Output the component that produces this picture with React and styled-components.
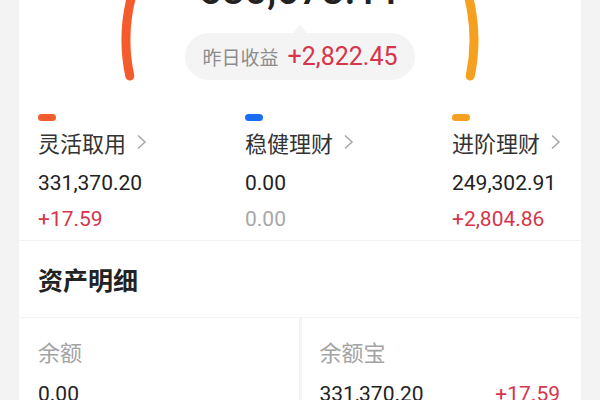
import React from 'react';
import styled, { createGlobalStyle } from 'styled-components';

const GlobalStyle = createGlobalStyle`
  html, body {
    margin: 0;
    padding: 0;
    background: #f3f3f3;
    overflow: hidden;
  }
  body {
    font-family: "Noto Sans CJK SC", "Noto Sans", sans-serif;
    color: #222;
  }
`;

const NUM_FONT = `Roboto, "Noto Sans CJK SC", sans-serif`;
const RED = '#d6354b';

const Page = styled.div`
  width: 600px;
  height: 400px;
  padding: 0 19px;
  box-sizing: border-box;
  display: flex;
  flex-direction: column;
  gap: 1px;
`;

const Card = styled.section`
  background: #fff;
`;

const Header = styled.div`
  position: relative;
  height: 114px;
  display: flex;
  flex-direction: column;
  align-items: center;
`;

const Gauge = styled.svg`
  position: absolute;
  left: 0;
  top: 0;
  width: 100%;
  height: 100px;
`;

const Total = styled.div`
  position: relative;
  margin-top: -29px;
  font-family: ${NUM_FONT};
  font-size: 40px;
  line-height: 40px;
  font-weight: 500;
  color: #222;
`;

const Bubble = styled.div`
  position: relative;
  margin-top: 22px;
  height: 47px;
  padding: 0 17px;
  display: inline-flex;
  align-items: center;
  gap: 9px;
  background: #f4f4f4;
  border-radius: 24px;

  &::before {
    content: '';
    position: absolute;
    left: 50%;
    top: -8px;
    margin-left: -7px;
    border-left: 7px solid transparent;
    border-right: 7px solid transparent;
    border-bottom: 8px solid #f4f4f4;
  }
`;

const BubbleLabel = styled.span`
  font-size: 19px;
  color: #8c8c8c;
`;

const BubbleValue = styled.span`
  font-family: ${NUM_FONT};
  font-size: 25px;
  color: ${RED};
`;

const Categories = styled.div`
  display: grid;
  grid-template-columns: 207px 207px 1fr;
  padding: 0 0 3px 19px;
`;

const Category = styled.div`
  display: flex;
  flex-direction: column;
  align-items: flex-start;
`;

const Dot = styled.span`
  width: 18px;
  height: 7px;
  border-radius: 4px;
  background: ${(p) => p.$color};
  margin-bottom: 6px;
`;

const Label = styled.div`
  display: flex;
  align-items: center;
  gap: 10px;
  font-size: 22px;
  line-height: 30px;
  margin-bottom: ${(p) => p.$space || '0'};
  color: ${(p) => (p.$muted ? '#a3a3a3' : '#333')};
`;

const Number = styled.div`
  font-family: ${NUM_FONT};
  font-size: 21px;
  line-height: 36px;
  color: ${(p) => p.$color || '#222'};
`;

const SectionTitle = styled.h2`
  margin: 0;
  height: 76px;
  padding-left: 19px;
  display: flex;
  align-items: center;
  font-size: 25px;
  font-weight: 600;
  color: #222;
`;

const DetailGrid = styled.div`
  display: grid;
  grid-template-columns: 1fr 1fr;
  gap: 3px;
  flex: 1;
`;

const DetailCard = styled.div`
  background: #fff;
  padding: 18px 21px 0 ${(p) => p.$indent || '19px'};
  display: flex;
  flex-direction: column;
  gap: 10px;
`;

const DetailRow = styled.div`
  display: flex;
  justify-content: space-between;
`;

const Chevron = () => (
  <svg width="11" height="16" viewBox="0 0 11 16">
    <polyline points="2,1.5 9,8 2,14.5" fill="none" stroke="#a6a6a6" strokeWidth="1.5" />
  </svg>
);

const CX = 281;
const CY = 40;
const R = 174;

const point = (deg) => {
  const a = (deg * Math.PI) / 180;
  return [CX + R * Math.cos(a), CY + R * Math.sin(a)];
};

const arcPath = (from, to) => {
  const [x1, y1] = point(from);
  const [x2, y2] = point(to);
  const large = to - from > 180 ? 1 : 0;
  return `M ${x1} ${y1} A ${R} ${R} 0 ${large} 1 ${x2} ${y2}`;
};

const categories = [
  { name: '灵活取用', color: '#f45b2d', amount: 331370.2, value: '331,370.20', gain: '+17.59' },
  { name: '稳健理财', color: '#1a6ef4', amount: 0, value: '0.00', gain: '0.00' },
  { name: '进阶理财', color: '#f6a020', amount: 249302.91, value: '249,302.91', gain: '+2,804.86' },
];

const GaugeArcs = () => {
  const tilt = (Math.asin(36 / R) * 180) / Math.PI;
  const start = 180 - tilt;
  const sweep = 180 + 2 * tilt;
  const total = categories.reduce((s, c) => s + c.amount, 0);
  let cursor = start;
  return (
    <Gauge viewBox="0 0 562 100" preserveAspectRatio="xMinYMin slice">
      {categories
        .filter((c) => c.amount > 0)
        .map((c) => {
          const from = cursor;
          const to = cursor + (sweep * c.amount) / total;
          cursor = to;
          return (
            <path
              key={c.name}
              d={arcPath(from, to)}
              fill="none"
              stroke={c.color}
              strokeWidth="9"
              strokeLinecap="round"
            />
          );
        })}
    </Gauge>
  );
};

export default function App() {
  return (
    <>
      <GlobalStyle />
      <Page>
        <Card>
          <Header>
            <GaugeArcs />
            <Total>580,673.11</Total>
            <Bubble>
              <BubbleLabel>昨日收益</BubbleLabel>
              <BubbleValue>+2,822.45</BubbleValue>
            </Bubble>
          </Header>
          <Categories>
            {categories.map((c) => (
              <Category key={c.name}>
                <Dot $color={c.color} />
                <Label $space="8px">
                  {c.name}
                  <Chevron />
                </Label>
                <Number>{c.value}</Number>
                <Number $color={c.gain.startsWith('+') ? RED : '#a8a8a8'}>{c.gain}</Number>
              </Category>
            ))}
          </Categories>
        </Card>
        <Card>
          <SectionTitle>资产明细</SectionTitle>
        </Card>
        <DetailGrid>
          <DetailCard>
            <Label $muted>余额</Label>
            <Number>0.00</Number>
          </DetailCard>
          <DetailCard $indent="18px">
            <Label $muted>余额宝</Label>
            <DetailRow>
              <Number>331,370.20</Number>
              <Number $color={RED}>+17.59</Number>
            </DetailRow>
          </DetailCard>
        </DetailGrid>
      </Page>
    </>
  );
}
